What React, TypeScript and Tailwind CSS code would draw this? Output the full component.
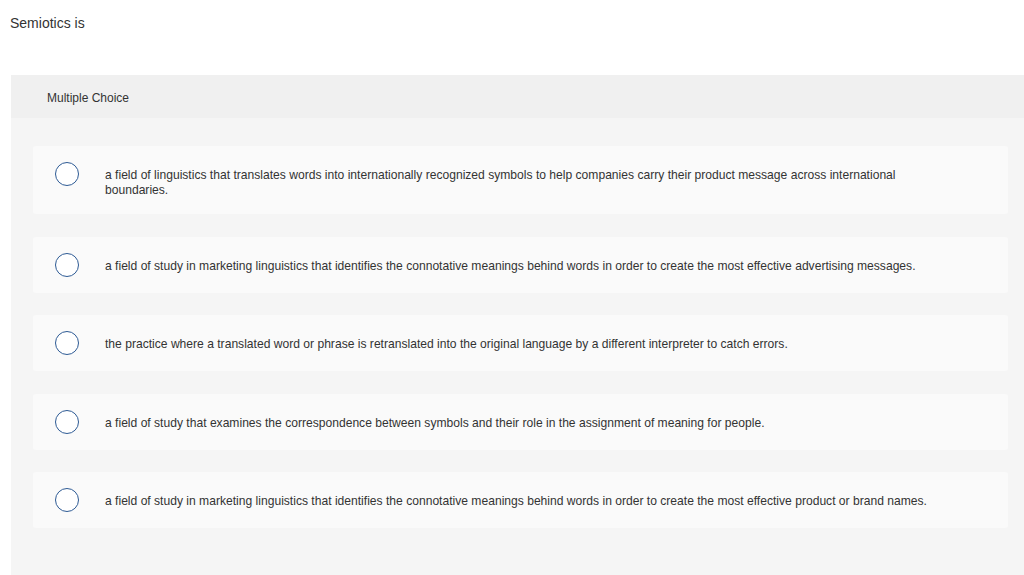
const choices = [
  "a field of linguistics that translates words into internationally recognized symbols to help companies carry their product message across international boundaries.",
  "a field of study in marketing linguistics that identifies the connotative meanings behind words in order to create the most effective advertising messages.",
  "the practice where a translated word or phrase is retranslated into the original language by a different interpreter to catch errors.",
  "a field of study that examines the correspondence between symbols and their role in the assignment of meaning for people.",
  "a field of study in marketing linguistics that identifies the connotative meanings behind words in order to create the most effective product or brand names.",
];

export default function App() {
  return (
    <div
      className="min-h-[575px] bg-white text-[#333]"
      style={{ fontFamily: '"Liberation Sans", Arial, sans-serif' }}
    >
      <div className="px-[10px] pt-[14px] text-[14px] leading-[18px]">Semiotics is</div>
      <section className="ml-[11px] mt-[43px] min-h-[500px] bg-[#f5f5f5]">
        <div className="flex h-[43px] items-center bg-[#f0f0f0] pl-[36px] pt-[2px] text-[12px]">
          Multiple Choice
        </div>
        <ul className="flex flex-col gap-[22.5px] pl-[22px] pr-[16px] pt-[28px]">
          {choices.map((choice, i) => (
            <li key={i} className="flex items-start rounded-[3px] bg-[#fafafa] px-[22px] py-[16px]">
              <span className="h-[24px] w-[24px] shrink-0 rounded-full border-[1.5px] border-[#2d5a94] bg-white" />
              <p className="ml-[26px] max-w-[830px] pt-[6px] text-[12.1px] leading-[15px]">{choice}</p>
            </li>
          ))}
        </ul>
      </section>
    </div>
  );
}
